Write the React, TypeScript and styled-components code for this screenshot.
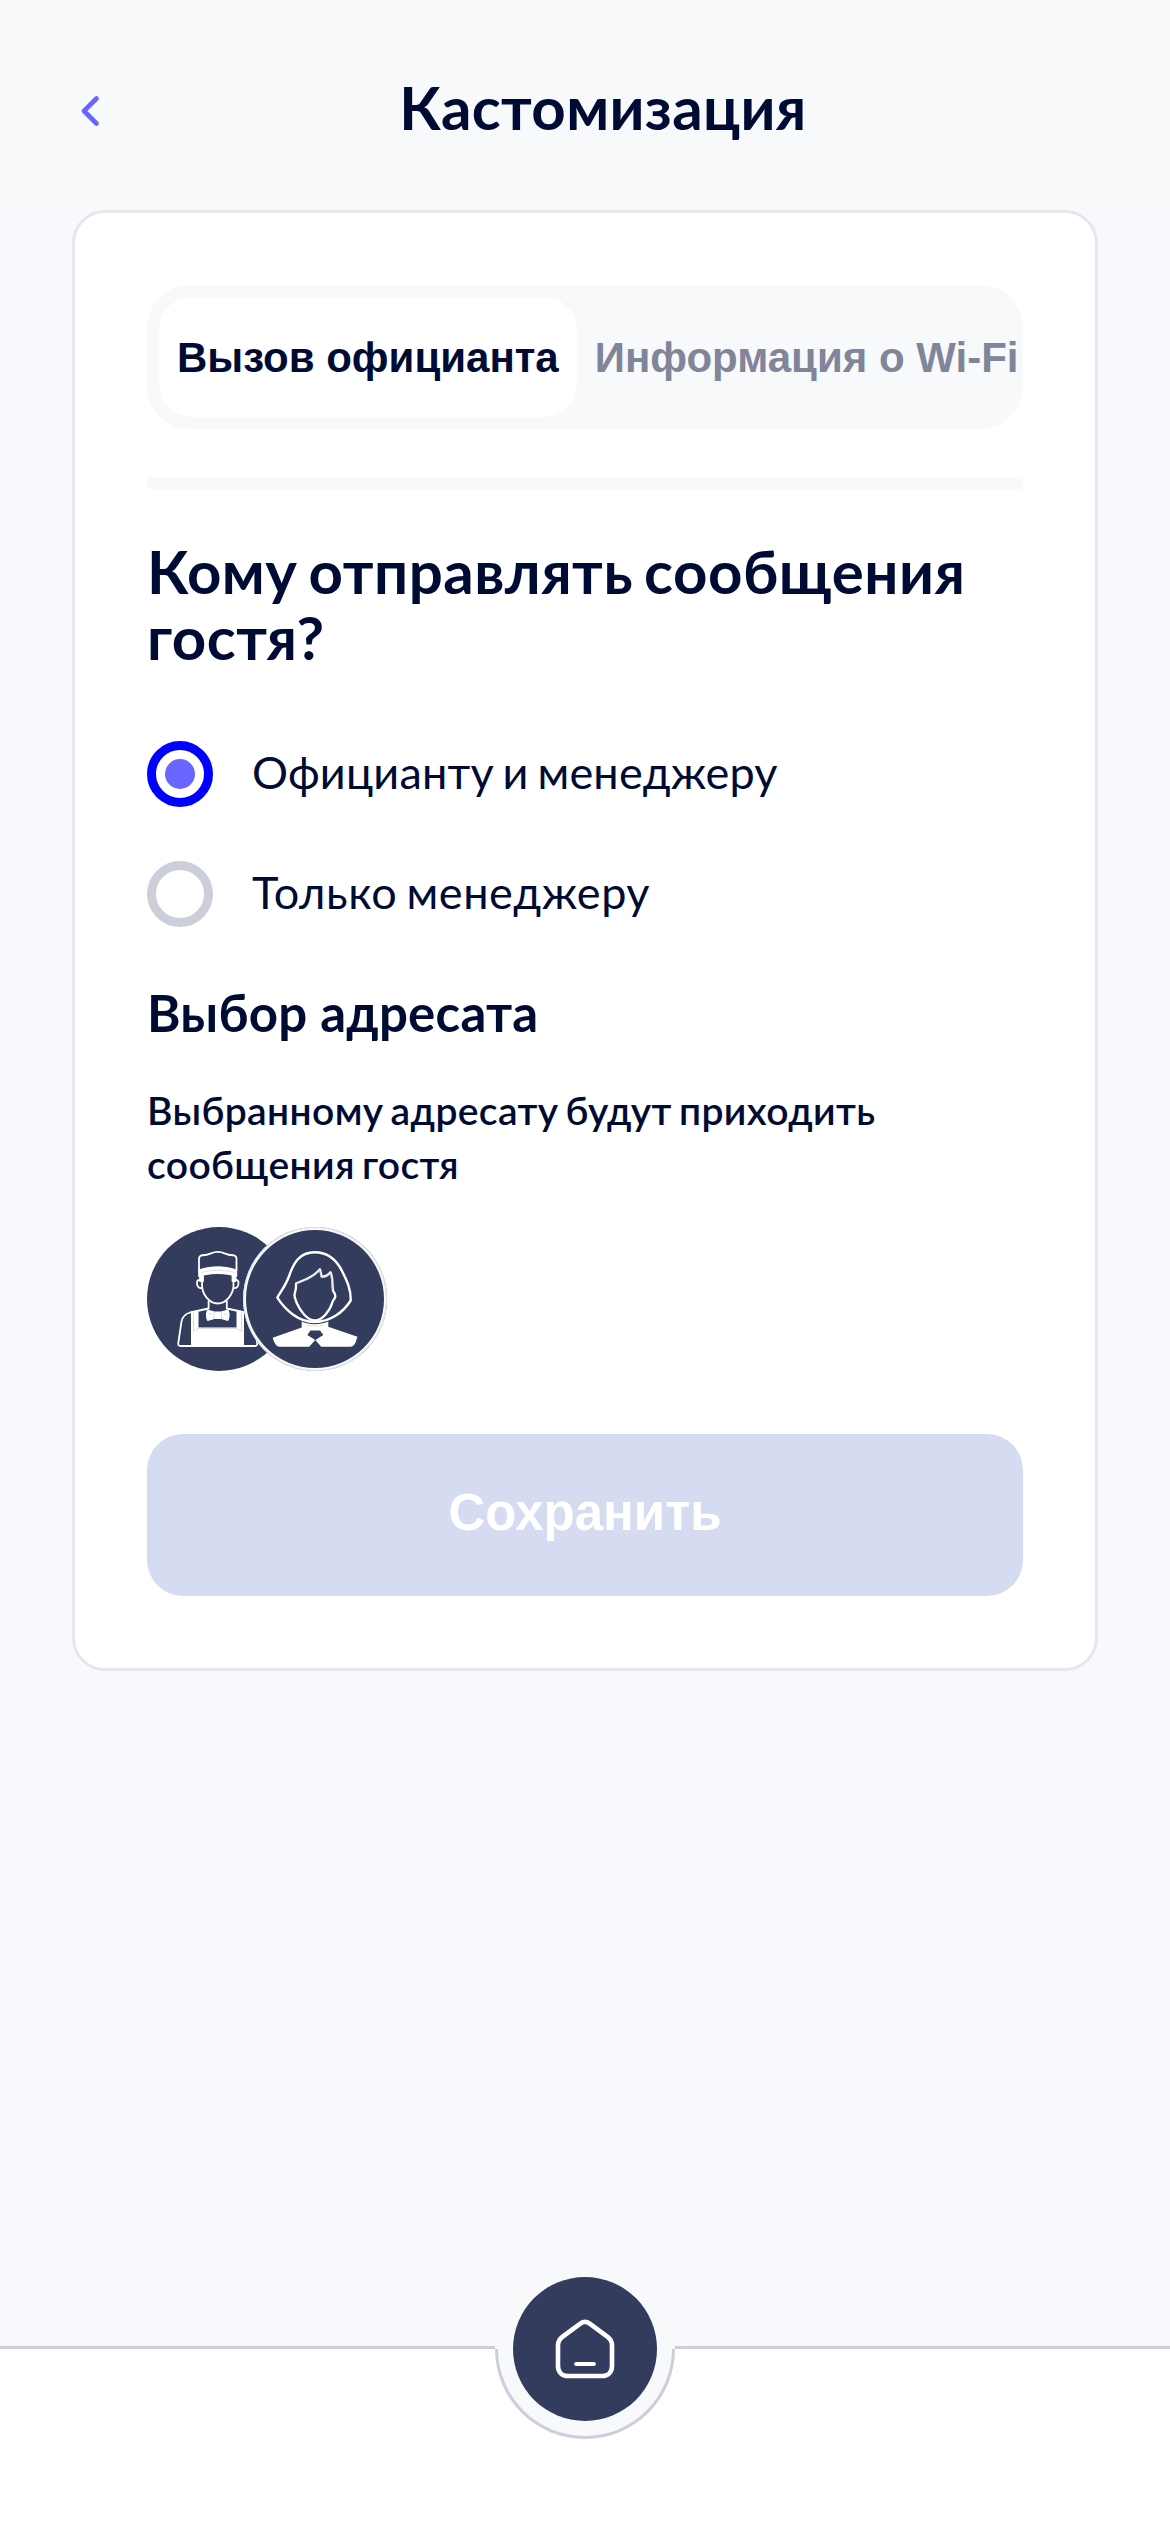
import React from "react";
import styled, { createGlobalStyle } from "styled-components";

const GlobalStyle = createGlobalStyle`
  *, *::before, *::after { box-sizing: border-box; }
  body { margin: 0; background: #f7f9fd; color: #000b33; }
  h1, h2, h3, p { margin: 0; }
  button { border: 0; padding: 0; background: none; font: inherit; color: inherit; }
`;

const Page = styled.div`
  display: flex;
  flex-direction: column;
  width: 1170px;
  height: 2532px;
  overflow: hidden;
  background: #f7f9fd;
  font-family: Lato, "Noto Sans", sans-serif;
`;

const Header = styled.header`
  display: flex;
  align-items: center;
  height: 210px;
  padding: 12px 72px 0;
  background: #f7f9fb;
`;

const BackButton = styled.button`
  display: flex;
  width: 36px;
  height: 36px;
`;

const Title = styled.h1`
  flex: 1;
  padding-bottom: 9px;
  text-align: center;
  font-size: 60px;
  font-weight: 700;
  line-height: 66px;
  letter-spacing: 0.35px;
`;

const Card = styled.main`
  display: flex;
  flex-direction: column;
  height: 1461px;
  margin: 0 72px;
  padding: 72px;
  border: 3px solid #e6e7eb;
  border-radius: 33px;
  background: #fff;
`;

const Tabs = styled.div`
  display: flex;
  height: 144px;
  padding: 12px;
  border-radius: 42px;
  background: #f7f9fb;
  overflow: hidden;
`;

const Tab = styled.button<{ $active?: boolean }>`
  flex: none;
  height: 120px;
  padding: 2px 18px 0;
  border-radius: 33px;
  background: ${(p) => (p.$active ? "#fff" : "transparent")};
  color: ${(p) => (p.$active ? "#000b33" : "#808599")};
  font: 700 42px/60px "Liberation Sans", Arial, sans-serif;
  white-space: nowrap;
`;

const Divider = styled.div`
  height: 12px;
  margin-top: 48px;
  background: #f7f9fb;
`;

const Question = styled.h2`
  margin-top: 49px;
  font-size: 60px;
  font-weight: 700;
  line-height: 66px;
  letter-spacing: 0.5px;
  word-spacing: -4px;
`;

const Options = styled.div`
  display: flex;
  flex-direction: column;
  gap: 54px;
  margin-top: 71px;
`;

const Option = styled.label`
  display: flex;
  align-items: center;
  gap: 39px;
  height: 66px;
`;

const RadioMark = styled.span<{ $checked?: boolean }>`
  display: flex;
  align-items: center;
  justify-content: center;
  width: 66px;
  height: 66px;
  border: 9px solid ${(p) => (p.$checked ? "#0000ff" : "#cccfd9")};
  border-radius: 50%;

  &::after {
    content: "";
    width: 30px;
    height: 30px;
    border-radius: 50%;
    background: ${(p) => (p.$checked ? "#6966ff" : "transparent")};
  }
`;

const OptionText = styled.span<{ $tracking: number }>`
  padding-bottom: 4px;
  font-size: 45px;
  line-height: 54px;
  letter-spacing: ${(p) => p.$tracking}px;
  word-spacing: -3px;
`;

const Subtitle = styled.h3`
  margin-top: 56px;
  font-size: 51px;
  font-weight: 700;
  line-height: 60px;
  letter-spacing: 0.25px;
`;

const Hint = styled.p`
  margin-top: 40px;
  font-size: 39px;
  font-weight: 600;
  line-height: 54px;
  letter-spacing: 0.38px;
  word-spacing: -3px;
`;

const Avatars = styled.div`
  display: flex;
  margin-top: 36px;
`;

const Avatar = styled.div<{ $stacked?: boolean }>`
  display: flex;
  flex: none;
  width: 144px;
  height: 144px;
  margin-left: ${(p) => (p.$stacked ? "-48px" : "0")};
  border-radius: 50%;
  background: #343c5d;
  box-shadow: ${(p) => (p.$stacked ? "inset 0 0 0 1px #dcdee8, inset 0 0 0 3px #f7f9fb" : "none")};
`;

const SaveButton = styled.button`
  height: 162px;
  margin-top: 63px;
  padding-bottom: 4px;
  border-radius: 36px;
  background: #d5dbf1;
  color: #fff;
  font: 700 51px/60px "Liberation Sans", Arial, sans-serif;
`;

const NavBar = styled.nav`
  display: flex;
  justify-content: center;
  height: 186px;
  margin-top: auto;
  border-top: 3px solid #ccceda;
  background: #fff;
`;

const HomeRing = styled.div`
  position: relative;
  display: flex;
  align-items: center;
  justify-content: center;
  width: 180px;
  height: 180px;
  margin-top: -90px;
  border-radius: 50%;
  background: #f7f9fb;

  &::before {
    content: "";
    position: absolute;
    left: 0;
    bottom: 0;
    width: 180px;
    height: 90px;
    border: 3px solid #ccceda;
    border-top: 0;
    border-radius: 0 0 90px 90px;
  }
`;

const HomeButton = styled.button`
  display: flex;
  align-items: center;
  justify-content: center;
  width: 144px;
  height: 144px;
  border-radius: 50%;
  background: #343c5d;
`;

const ChevronIcon = () => (
  <svg width="36" height="36" viewBox="0 0 36 36" fill="none">
    <path d="M24.500 5.500 12 18l12.500 12.500" stroke="#6966ff" strokeWidth="4.700" strokeLinecap="round" strokeLinejoin="round" />
  </svg>
);

const WaiterIcon = () => (
  <svg width="144" height="144" viewBox="0 0 144 144" fill="none" stroke="#fff" strokeWidth="1.800" strokeLinejoin="round">
    <path d="M52 44V32c0-2 1-3.200 3-3.800 3 .2 6-.5 9-1.800 4.500-2 9-2 13.500 0 3 1.300 6 2 9 1.800 2 .6 3 1.800 3 3.800v12" />
    <path d="M51.700 43c12-4.200 26-4.200 38 0v6.500c-12-4-26-4-38 0z" fill="#fff" strokeWidth="1" />
    <path d="M54 45.500c11-3 22.500-3 33.500 0" stroke="#ccceda" strokeWidth=".7" />
    <path d="M53 49h3v5h-3zM85.500 49h3v5h-3z" fill="#fff" />
    <path d="M54.500 53.500c-3-1.500-4.800 0-4.500 3 .3 3.500 2 5 5 4.500M87 53.500c3-1.500 4.800 0 4.500 3-.3 3.500-2 5-5 4.500" />
    <path d="M55 50v8c0 9 7 18.500 15.700 18.500S86.500 67 86.500 58v-8" />
    <path d="M61.600 74v7.500L43 85.500c-5 1.500-7.500 4-8.500 9l-3.200 21.500c-.3 2 .5 3 2.200 3H108c1.700 0 2.500-1 2.200-3L107 94.500c-1-5-3.500-7.500-8.500-9l-18.700-4V74" />
    <path d="M44 86l7.500-2v16.500h38V84l7.500 2v33H44z" fill="#fff" stroke="none" />
    <path d="M46.500 86v18.500l5-3.200h38l5 3.200V86" stroke="#ccceda" strokeWidth=".8" />
    <path d="M60.500 83l7 2h6.500l7-2c1.500 3 1.500 7 0 10.500l-7-2h-6.500l-7 2c-1.500-3.500-1.500-7.500 0-10.500z" fill="#fff" stroke="#fff" strokeWidth="1" />
    <path d="M67 84.500v7M74.500 84.500v7M61.500 87h3M77 87h3" stroke="#ccceda" strokeWidth=".7" />
  </svg>
);

const ManagerIcon = () => (
  <svg width="144" height="144" viewBox="0 0 144 144" fill="none" stroke="#fff" strokeLinejoin="round">
    <path d="M71.500 25.300c-15 0-21 11-25 22.700-3 9-8 15.500-12.200 22.700 8 12.300 21 24.300 37.200 24.300 16 0 29-10 36.200-21.500C108 62 104 54 99.500 45c-5-10.500-13-19.700-28-19.700z" strokeWidth="2.400" />
    <path d="M53 56.500c9-3.500 18-7 24-14.200l1.700 7.500c4 0 6.500-1.500 8.800-4.500 2.500 5.500 1.500 12 2.500 18 .8 2.500 2.500 3.500 2.300 6.200-.3 2.500-2.300 3.500-3 6C87 84 79 93.500 72 93.500c-8 0-15-10-18.500-18-.7-2.500-2-4.500-2-7.500 0-3 2-4 1.500-11.500z" strokeWidth="2.300" />
    <path d="M53.200 57c9-3.500 17.500-6.500 23.500-13.500l1.500 7c4 0 7-1 9.200-4 1.800 5 1 11 2 16.500" stroke="#9ca0b5" strokeWidth=".6" />
    <path d="M58.700 94.500c8 3.500 18 3.500 26.600 0v5.200l29.200 10-1.500 4.500c-1.500 4-3 5.500-6.500 5.500H78.200L72.300 113l8-5-3.300-4.500H67.500l-3.200 4.500 8 5-6.100 6.700H36.500c-3.500 0-5.500-4.500-6.800-9l29-10.200z" fill="#fff" stroke="none" />
    <path d="M63 98c6 1.500 12 1.500 18 0" stroke="#ccceda" strokeWidth=".5" />
  </svg>
);

const HomeIcon = () => (
  <svg width="60" height="60" viewBox="0 0 60 60" fill="none" stroke="#fff" strokeWidth="4.600" strokeLinecap="round" strokeLinejoin="round">
    <path d="M25.300 4.600c3-2.100 6.400-2.100 9.400 0l17.600 13c3.400 2.600 4.700 4.800 4.700 8.400V47c0 6-4 10-10 10H13C7 57 3 53 3 47V26c0-3.600 1.300-5.800 4.700-8.400z" />
    <path d="M21.200 45h17.600" strokeWidth="4.200" />
  </svg>
);

export default function App() {
  return (
    <Page>
      <GlobalStyle />
      <Header>
        <BackButton aria-label="Назад"><ChevronIcon /></BackButton>
        <Title>Кастомизация</Title>
      </Header>
      <Card>
        <Tabs>
          <Tab $active>Вызов официанта</Tab>
          <Tab>Информация о Wi-Fi</Tab>
        </Tabs>
        <Divider />
        <Question>Кому отправлять сообщения гостя?</Question>
        <Options>
          <Option><RadioMark $checked /><OptionText $tracking={0.2}>Официанту и менеджеру</OptionText></Option>
          <Option><RadioMark /><OptionText $tracking={0.6}>Только менеджеру</OptionText></Option>
        </Options>
        <Subtitle>Выбор адресата</Subtitle>
        <Hint>Выбранному адресату будут приходить сообщения гостя</Hint>
        <Avatars>
          <Avatar><WaiterIcon /></Avatar>
          <Avatar $stacked><ManagerIcon /></Avatar>
        </Avatars>
        <SaveButton>Сохранить</SaveButton>
      </Card>
      <NavBar>
        <HomeRing>
          <HomeButton aria-label="Главная"><HomeIcon /></HomeButton>
        </HomeRing>
      </NavBar>
    </Page>
  );
}
